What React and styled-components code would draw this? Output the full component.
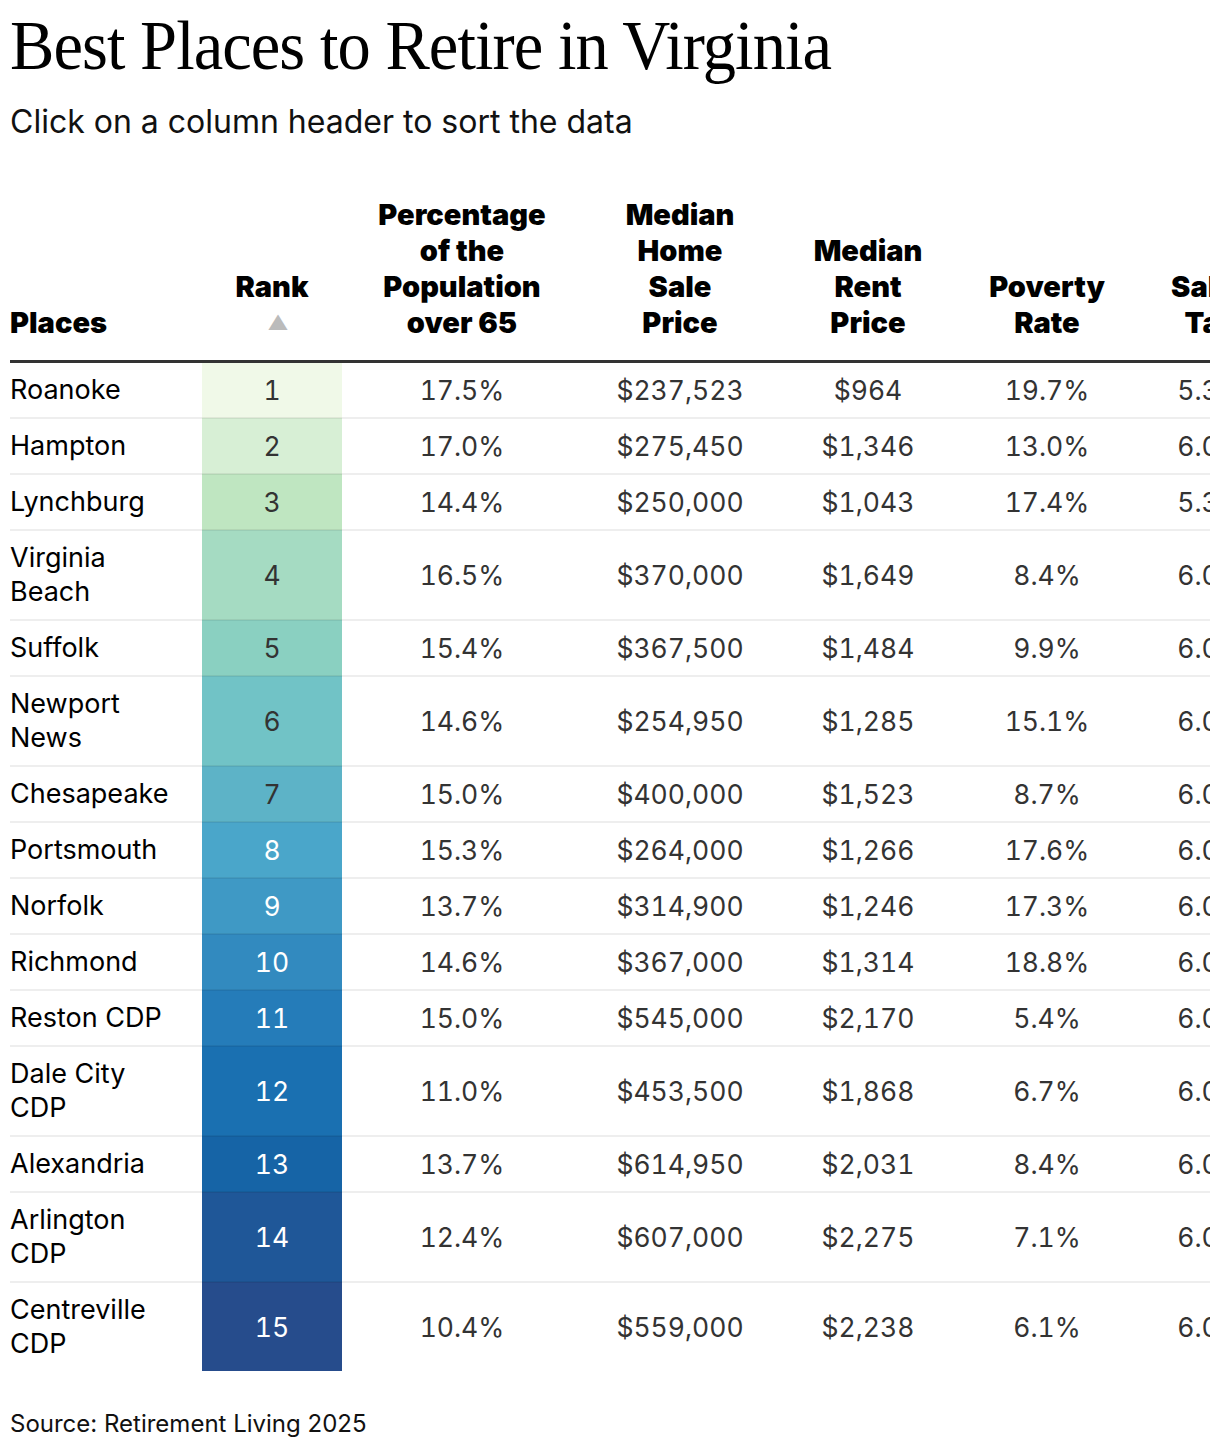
import React from 'react';
import styled, { createGlobalStyle } from 'styled-components';

const GlobalStyle = createGlobalStyle`
  html, body {
    margin: 0;
    padding: 0;
    background: #fff;
  }
  body {
    font-family: Inter, "Noto Sans", sans-serif;
    color: #111;
  }
`;

const Page = styled.div`
  width: 1200px;
  padding: 0 10px;
  overflow: hidden;
`;

const Title = styled.h1`
  margin: 0;
  padding-top: 6px;
  font-family: "Liberation Serif", "DejaVu Serif", serif;
  font-weight: 400;
  font-size: 70px;
  line-height: 80px;
  letter-spacing: -1px;
  color: #000;
  white-space: nowrap;
  transform: scaleX(0.95);
  transform-origin: left center;
`;

const Subtitle = styled.p`
  margin: 16px 0 0;
  font-size: 32px;
  line-height: 40px;
  color: #111;
`;

const TableWrap = styled.div`
  margin-top: 55px;
  overflow: hidden;
`;

const Table = styled.table`
  width: 1276px;
  table-layout: fixed;
  border-collapse: collapse;
`;

const HeadCell = styled.th`
  padding: 0 ${p => (p.$left ? '12px' : '28px')} 19px ${p => (p.$left ? '0' : '28px')};
  vertical-align: bottom;
  text-align: ${p => (p.$left ? 'left' : 'center')};
  font-size: 29px;
  line-height: 36px;
  font-weight: 900;
  color: #000;
  border-bottom: 3px solid #333;
  cursor: pointer;
`;

const SortArrow = styled.span`
  display: block;
  height: 36px;
  padding-left: 12px;
  font-size: 20px;
  line-height: 36px;
  color: #bbb;
`;

const Row = styled.tr`
  border-bottom: 2px solid rgba(0, 0, 0, 0.065);
  &:last-child {
    border-bottom: none;
  }
`;

const PlaceCell = styled.td`
  padding: 10px 27px 10px 0;
  font-size: 27px;
  line-height: 34px;
  color: #000;
  text-align: left;
`;

const RankCell = styled.td`
  padding: 10px 0;
  font-size: 26.5px;
  line-height: 34px;
  text-align: center;
  font-feature-settings: 'tnum';
  background: ${p => p.$bg};
  color: ${p => (p.$light ? '#fff' : '#333')};
`;

const ValueCell = styled.td`
  padding: 10px 0;
  font-size: 26.5px;
  line-height: 34px;
  text-align: center;
  font-feature-settings: 'tnum';
  color: #333;
  white-space: nowrap;
`;

const Source = styled.p`
  margin: 38px 0 0;
  padding-bottom: 20px;
  font-size: 24px;
  line-height: 30px;
  color: #111;
`;

const rankColors = [
  '#f0f9e8', '#d7efd5', '#bfe6c1', '#a5dbc2', '#8ad0c1',
  '#71c3c6', '#5db3c7', '#4aa6ca', '#3f99c5', '#328abf',
  '#257cb9', '#1a70b1', '#1664a6', '#1f5798', '#264c8c',
];

const rows = [
  ['Roanoke', '17.5%', '$237,523', '$964', '19.7%', '5.3%'],
  ['Hampton', '17.0%', '$275,450', '$1,346', '13.0%', '6.0%'],
  ['Lynchburg', '14.4%', '$250,000', '$1,043', '17.4%', '5.3%'],
  ['Virginia Beach', '16.5%', '$370,000', '$1,649', '8.4%', '6.0%'],
  ['Suffolk', '15.4%', '$367,500', '$1,484', '9.9%', '6.0%'],
  ['Newport News', '14.6%', '$254,950', '$1,285', '15.1%', '6.0%'],
  ['Chesapeake', '15.0%', '$400,000', '$1,523', '8.7%', '6.0%'],
  ['Portsmouth', '15.3%', '$264,000', '$1,266', '17.6%', '6.0%'],
  ['Norfolk', '13.7%', '$314,900', '$1,246', '17.3%', '6.0%'],
  ['Richmond', '14.6%', '$367,000', '$1,314', '18.8%', '6.0%'],
  ['Reston CDP', '15.0%', '$545,000', '$2,170', '5.4%', '6.0%'],
  ['Dale City CDP', '11.0%', '$453,500', '$1,868', '6.7%', '6.0%'],
  ['Alexandria', '13.7%', '$614,950', '$2,031', '8.4%', '6.0%'],
  ['Arlington CDP', '12.4%', '$607,000', '$2,275', '7.1%', '6.0%'],
  ['Centreville CDP', '10.4%', '$559,000', '$2,238', '6.1%', '6.0%'],
];

const widths = [192, 140, 240, 196, 180, 178, 150];

const App = () => (
  <Page>
    <GlobalStyle />
    <Title>Best Places to Retire in Virginia</Title>
    <Subtitle>Click on a column header to sort the data</Subtitle>
    <TableWrap>
      <Table>
        <colgroup>
          {widths.map((w, i) => <col key={i} style={{ width: w }} />)}
        </colgroup>
        <thead>
          <tr>
            <HeadCell $left>Places</HeadCell>
            <HeadCell>
              Rank
              <SortArrow>▲</SortArrow>
            </HeadCell>
            <HeadCell>Percentage of the Population over 65</HeadCell>
            <HeadCell>Median Home Sale Price</HeadCell>
            <HeadCell>Median Rent Price</HeadCell>
            <HeadCell>Poverty Rate</HeadCell>
            <HeadCell>Sales Tax</HeadCell>
          </tr>
        </thead>
        <tbody>
          {rows.map(([place, pct, home, rent, poverty, tax], i) => (
            <Row key={place}>
              <PlaceCell>{place}</PlaceCell>
              <RankCell $bg={rankColors[i]} $light={i >= 7}>{i + 1}</RankCell>
              <ValueCell>{pct}</ValueCell>
              <ValueCell>{home}</ValueCell>
              <ValueCell>{rent}</ValueCell>
              <ValueCell>{poverty}</ValueCell>
              <ValueCell>{tax}</ValueCell>
            </Row>
          ))}
        </tbody>
      </Table>
    </TableWrap>
    <Source>Source: Retirement Living 2025</Source>
  </Page>
);

export default App;
